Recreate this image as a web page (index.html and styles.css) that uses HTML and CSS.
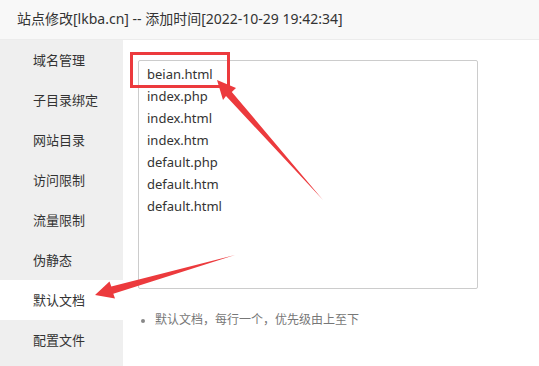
FILE: index.html
```html
<!DOCTYPE html>
<html lang="zh-CN">
<head>
<meta charset="utf-8">
<link rel="stylesheet" href="styles.css">
</head>
<body>
<div class="page">
  <div class="header">站点修改[lkba.cn] -- 添加时间[2022-10-29 19:42:34]</div>
  <div class="main">
    <ul class="side">
      <li>域名管理</li>
      <li>子目录绑定</li>
      <li>网站目录</li>
      <li>访问限制</li>
      <li>流量限制</li>
      <li>伪静态</li>
      <li class="active">默认文档</li>
      <li>配置文件</li>
    </ul>
    <div class="content">
      <div class="textarea">
        <div class="line">beian.html</div>
        <div class="line">index.php</div>
        <div class="line">index.html</div>
        <div class="line">index.htm</div>
        <div class="line">default.php</div>
        <div class="line">default.htm</div>
        <div class="line">default.html</div>
      </div>
      <ul class="hint">
        <li>默认文档，每行一个，优先级由上至下</li>
      </ul>
    </div>
  </div>
  <div class="mark-box"></div>
  <svg class="arrows" width="539" height="366" viewBox="0 0 539 366">
    <polygon fill="#ec3a3d" points="217,80 236,88 231.8,91.9 323,200 226,96 223,100"/>
    <polygon fill="#ec3a3d" points="95,295 109.5,281.5 111.3,286.6 235,255 113.3,293.7 115,298.5"/>
  </svg>
</div>
</body>
</html>
```
FILE: styles.css
```css
* { box-sizing: border-box; }
html, body { margin: 0; padding: 0; background: #fff; }
body {
  font-family: "Noto Sans", "Noto Sans CJK SC", sans-serif;
  color: #333;
  width: 539px;
  height: 366px;
  overflow: hidden;
}
.page { position: relative; width: 539px; height: 366px; }
.header {
  height: 40px;
  line-height: 38px;
  padding-left: 17px;
  font-size: 14px;
  color: #333;
  background: #f8f8f8;
  border-bottom: 1px solid #ececec;
}
.main { display: flex; height: 326px; }
.side {
  list-style: none;
  margin: 0;
  padding: 0;
  width: 123px;
  background: #efefef;
  flex: none;
}
.side li {
  height: 40px;
  line-height: 40px;
  padding-left: 33px;
  font-size: 13px;
  color: #333;
}
.side li.active { background: #fff; }
.content { flex: 1; padding: 20px 0 0 15px; }
.textarea {
  width: 340px;
  height: 229px;
  border: 1px solid #ccc;
  border-radius: 2px;
  padding: 2px 0 0 8px;
}
.line {
  height: 22px;
  line-height: 22px;
  font-size: 13px;
  color: #333;
}
.hint {
  margin: 21px 0 0 0;
  padding: 0 0 0 17px;
  font-size: 12px;
  color: #777;
}
.hint li { line-height: 20px; }
.hint li::marker { color: #888; font-size: 10px; }
.mark-box {
  position: absolute;
  left: 130px;
  top: 52px;
  width: 100px;
  height: 36px;
  border: 3px solid #ec3a3d;
}
.arrows { position: absolute; left: 0; top: 0; pointer-events: none; }
```
